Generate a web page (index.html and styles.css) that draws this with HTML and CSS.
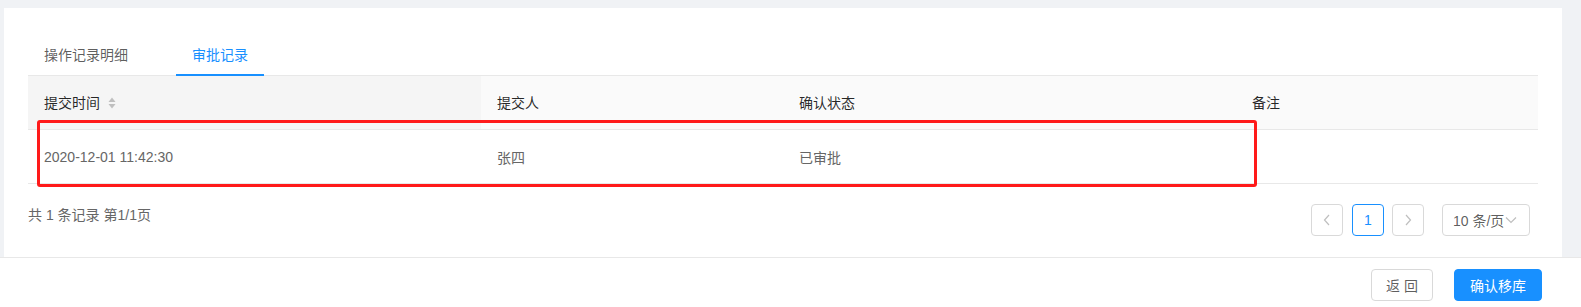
FILE: index.html
```html
<!DOCTYPE html>
<html lang="zh-CN">
<head>
<meta charset="utf-8">
<title>审批记录</title>
<link rel="stylesheet" href="styles.css">
</head>
<body>
<div class="page">
  <div class="card">
    <div class="tabs">
      <div class="tab">操作记录明细</div>
      <div class="tab active">审批记录</div>
    </div>
    <table class="table">
      <colgroup>
        <col class="c30"><col class="c20"><col class="c30"><col class="c20">
      </colgroup>
      <thead>
        <tr>
          <th class="sorted"><span class="th-inner">提交时间<span class="sorter"><svg width="8" height="12" viewBox="0 0 8 12"><path d="M4 0.5 L7.5 5 H0.5 Z" fill="#bfbfbf"/><path d="M0.5 7 H7.5 L4 11.5 Z" fill="#bfbfbf"/></svg></span></span></th>
          <th>提交人</th>
          <th>确认状态</th>
          <th>备注</th>
        </tr>
      </thead>
      <tbody>
        <tr>
          <td>2020-12-01 11:42:30</td>
          <td>张四</td>
          <td>已审批</td>
          <td></td>
        </tr>
      </tbody>
    </table>
    <div class="pager-row">
      <div class="total">共 1 条记录 第1/1页</div>
      <div class="pager">
        <span class="pbtn disabled"><svg width="10" height="12" viewBox="0 0 10 12"><path d="M7 1 L2.5 6 L7 11" fill="none" stroke="#bfbfbf" stroke-width="1.2"/></svg></span>
        <span class="pbtn current">1</span>
        <span class="pbtn disabled"><svg width="10" height="12" viewBox="0 0 10 12"><path d="M3 1 L7.5 6 L3 11" fill="none" stroke="#bfbfbf" stroke-width="1.2"/></svg></span>
        <span class="size">10 条/页<svg width="12" height="8" viewBox="0 0 12 8"><path d="M1 1.5 L6 6.5 L11 1.5" fill="none" stroke="#bfbfbf" stroke-width="1.2"/></svg></span>
      </div>
    </div>
    <div class="mark"></div>
  </div>
</div>
<div class="footer">
  <button class="btn">返 回</button>
  <button class="btn primary">确认移库</button>
</div>
</body>
</html>
```
FILE: styles.css
```css
* { box-sizing: border-box; }
html, body { margin: 0; padding: 0; }
body {
  background: #f0f2f5;
  font-family: "Liberation Sans", "Noto Sans CJK SC", sans-serif;
  font-size: 14px;
  color: rgba(0,0,0,.65);
  width: 1581px;
  height: 307px;
  overflow: hidden;
}
.page { padding: 8px 19px 0 4px; }
.card {
  position: relative;
  background: #fff;
  height: 249px;
  padding: 27px 24px 0 24px;
}
.tabs {
  display: flex;
  height: 41px;
  border-bottom: 1px solid #e8e8e8;
}
.tab {
  padding: 0 16px;
  margin-right: 32px;
  line-height: 40px;
  height: 41px;
  color: rgba(0,0,0,.65);
}
.tab.active {
  color: #1890ff;
  border-bottom: 2px solid #1890ff;
}
.table {
  width: 100%;
  border-collapse: collapse;
  table-layout: fixed;
}
.c30 { width: 30%; }
.c20 { width: 20%; }
.table th, .table td {
  text-align: left;
  padding: 0 16px;
  border-bottom: 1px solid #e8e8e8;
  font-weight: normal;
}
.table th {
  height: 53px;
  background: #fafafa;
  color: rgba(0,0,0,.85);
}
.table th.sorted { background: #f5f5f5; }
.th-inner { display: inline-flex; align-items: center; }
.sorter { display: inline-flex; margin-left: 8px; margin-top: 1px; }
.table td {
  height: 54px;
  color: #666;
  padding-top: 2px;
}
.pager-row {
  display: flex;
  justify-content: space-between;
  align-items: flex-start;
  margin-top: 20px;
  padding-right: 8px;
}
.total { line-height: 22px; color: #666; }
.pager { display: flex; align-items: center; }
.pbtn {
  width: 32px;
  height: 32px;
  border: 1px solid #d9d9d9;
  border-radius: 4px;
  display: flex;
  align-items: center;
  justify-content: center;
  margin-right: 8px;
  color: rgba(0,0,0,.65);
}
.pbtn.current { border-color: #1890ff; color: #1890ff; margin-left: 1px; }
.size {
  margin-left: 10px;
  width: 88px;
  height: 32px;
  border: 1px solid #d9d9d9;
  border-radius: 4px;
  display: flex;
  align-items: center;
  padding-left: 10px;
  color: rgba(0,0,0,.65);
  gap: 1px;
}
.mark {
  position: absolute;
  left: 33px;
  top: 112px;
  width: 1220px;
  height: 67px;
  border: 3px solid #ff1a1a;
  border-radius: 3px;
}
.footer {
  background: #fff;
  border-top: 1px solid #e8e8e8;
  height: 50px;
  display: flex;
  justify-content: flex-end;
  align-items: flex-start;
  padding: 11px 39px 0 0;
}
.btn {
  font-family: inherit;
  font-size: 14px;
  height: 32px;
  width: 62px;
  border: 1px solid #d9d9d9;
  border-radius: 4px;
  background: #fff;
  color: rgba(0,0,0,.65);
  padding: 0;
}
.btn.primary {
  width: 88px;
  margin-left: 21px;
  background: #1890ff;
  border-color: #1890ff;
  color: #fff;
}
```
